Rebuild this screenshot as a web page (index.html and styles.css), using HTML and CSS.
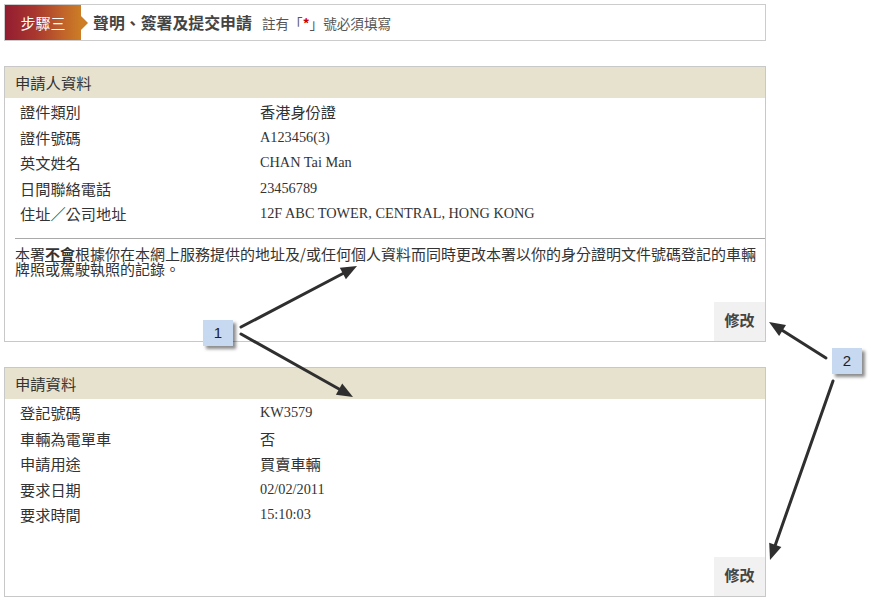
FILE: index.html
```html
<!DOCTYPE html>
<html lang="zh-Hant">
<head>
<meta charset="utf-8">
<title>聲明、簽署及提交申請</title>
<link rel="stylesheet" href="styles.css">
</head>
<body>
<div class="page">
  <div class="step-bar">
    <div class="step-label">步驟三</div>
    <div class="step-arrow"></div>
    <h1 class="step-title">聲明、簽署及提交申請</h1>
    <span class="step-note">註有「<b class="star">*</b>」號必須填寫</span>
  </div>

  <section class="panel panel-applicant">
    <div class="panel-head">申請人資料</div>
    <div class="fields">
      <div class="label">證件類別</div><div class="value cjk">香港身份證</div>
      <div class="label">證件號碼</div><div class="value">A123456(3)</div>
      <div class="label">英文姓名</div><div class="value">CHAN Tai Man</div>
      <div class="label">日間聯絡電話</div><div class="value">23456789</div>
      <div class="label">住址／公司地址</div><div class="value">12F ABC TOWER, CENTRAL, HONG KONG</div>
    </div>
    <p class="notice">本署<b class="em">不會</b>根據你在本網上服務提供的地址及/或任何個人資料而同時更改本署以你的身分證明文件號碼登記的車輛牌照或駕駛執照的記錄。</p>
    <div class="actions"><button class="btn">修改</button></div>
  </section>

  <section class="panel panel-request">
    <div class="panel-head">申請資料</div>
    <div class="fields">
      <div class="label">登記號碼</div><div class="value">KW3579</div>
      <div class="label">車輛為電單車</div><div class="value cjk">否</div>
      <div class="label">申請用途</div><div class="value cjk">買賣車輛</div>
      <div class="label">要求日期</div><div class="value">02/02/2011</div>
      <div class="label">要求時間</div><div class="value">15:10:03</div>
    </div>
    <div class="actions"><button class="btn">修改</button></div>
  </section>
</div>

<div class="callout callout-1">1</div>
<div class="callout callout-2">2</div>

<svg class="annotations" width="896" height="613" viewBox="0 0 896 613" xmlns="http://www.w3.org/2000/svg">
  <g stroke="#2f2f2f" stroke-width="3" stroke-linecap="round" fill="none">
    <line x1="241" y1="327" x2="343" y2="273.5"/>
    <line x1="241" y1="334" x2="339" y2="389"/>
    <line x1="826" y1="358" x2="782.5" y2="330.5"/>
    <line x1="833" y1="381" x2="775.3" y2="545"/>
  </g>
  <g fill="#2f2f2f">
    <polygon points="357,266 345.9,279.2 339.8,267.7"/>
    <polygon points="353,397 335.9,394.8 342.2,383.5"/>
    <polygon points="769,322 786,325 779.1,336"/>
    <polygon points="770,560 769.2,542.7 781.4,547.1"/>
  </g>
</svg>
</body>
</html>
```

FILE: styles.css
```css
html, body {
  margin: 0;
  padding: 0;
  background: #ffffff;
}

body {
  padding: 4px;
  font-family: "Noto Sans CJK TC", "Noto Sans", sans-serif;
  color: #333333;
  position: relative;
  width: 896px;
  height: 613px;
  box-sizing: border-box;
  overflow: hidden;
}

.page {
  width: 762px;
  display: flex;
  flex-direction: column;
  gap: 25px;
}

/* step bar */
.step-bar {
  display: flex;
  align-items: center;
  height: 37px;
  box-sizing: border-box;
  border: 1px solid #cccccc;
}

.step-label {
  width: 76px;
  height: 35px;
  background: linear-gradient(to right, #941c31 0%, #a9372e 40%, #c0622a 75%, #cc7d25 100%);
  color: #ffffff;
  font-size: 15px;
  line-height: 35px;
  text-align: center;
}

.step-arrow {
  width: 0;
  height: 0;
  border-top: 7px solid transparent;
  border-bottom: 7px solid transparent;
  border-left: 7px solid #cc7d25;
}

.step-title {
  margin: 0 0 0 5px;
  font-size: 15.9px;
  font-weight: bold;
  color: #444444;
  line-height: 20px;
}

.step-note {
  margin-left: 10px;
  font-size: 13.6px;
  color: #555555;
  line-height: 20px;
}

.star {
  color: #cc0000;
  font-weight: bold;
}

/* panels */
.panel {
  box-sizing: border-box;
  border: 1px solid #c8c8c8;
  display: flex;
  flex-direction: column;
}

.panel-applicant { height: 276px; }
.panel-request { height: 230px; }

.panel-head {
  height: 31px;
  line-height: 31px;
  background: #e7e2cd;
  padding-left: 10px;
  font-size: 15.3px;
  color: #333333;
}

.fields {
  display: grid;
  grid-template-columns: 240px 1fr;
  grid-auto-rows: 25.5px;
  padding: 1px 0 0 15px;
}

.label {
  font-size: 15.2px;
  line-height: 25.5px;
  color: #333333;
}

.value {
  font-family: "Liberation Serif", "Times New Roman", serif;
  font-size: 14.3px;
  line-height: 25.5px;
  color: #333333;
}

.value.cjk {
  font-family: "Noto Sans CJK TC", sans-serif;
  font-size: 15.2px;
}

.notice {
  margin: 11px 0 0 10px;
  padding: 7px 0 0 0;
  border-top: 1px solid #a9a9a9;
  font-size: 15px;
  line-height: 15px;
  color: #333333;
}

.em {
  font-weight: bold;
  text-decoration: underline;
}

.actions {
  margin-top: auto;
  display: flex;
  justify-content: flex-end;
}

.btn {
  width: 51px;
  height: 39px;
  border: 0;
  padding: 0 0 4px 0;
  background: #f1f1f1;
  font-family: "Noto Sans CJK TC", sans-serif;
  font-size: 15px;
  font-weight: bold;
  color: #444444;
}

/* annotations */
.callout {
  position: absolute;
  width: 30px;
  height: 26px;
  background: #c6d9f1;
  box-shadow: 3px 3px 3px rgba(0, 0, 0, 0.45);
  font-family: "Liberation Sans", Arial, sans-serif;
  font-size: 15px;
  line-height: 26px;
  text-align: center;
  color: #222222;
}

.callout-1 { left: 203px; top: 320px; }
.callout-2 { left: 832px; top: 348px; }

.annotations {
  position: absolute;
  left: 0;
  top: 0;
  pointer-events: none;
}
```
